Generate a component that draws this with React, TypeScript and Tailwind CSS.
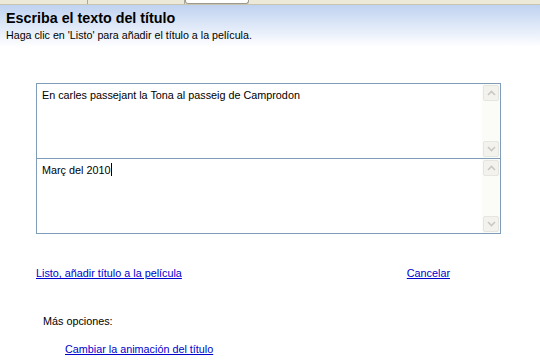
import React from "react"

function Arrow({ up }: { up: boolean }) {
  return (
    <div className="flex h-[16px] w-[16px] items-center justify-center rounded-[2px] border border-[#e6e6e0] bg-[#f3f2ec]">
      <svg width="9" height="6" viewBox="0 0 9 6">
        <path
          d={up ? "M1 5 L4.5 1.5 L8 5" : "M1 1 L4.5 4.5 L8 1"}
          fill="none"
          stroke="#c9c9c4"
          strokeWidth="1.6"
        />
      </svg>
    </div>
  )
}

function TextBox({ text, caret }: { text: string; caret?: boolean }) {
  return (
    <div className="flex h-[76px] border border-[#7f9db9] bg-white">
      <div className="flex-1 px-[5px] pt-[4px] text-[10.8px] leading-[14px] text-black">
        {text}
        {caret && <span className="ml-[1px] inline-block h-[13px] w-[1px] bg-black align-[-2px]" />}
      </div>
      <div className="flex w-[18px] flex-col justify-between bg-[#fbfbf8] p-[1px]">
        <Arrow up />
        <Arrow up={false} />
      </div>
    </div>
  )
}

export default function App() {
  return (
    <div className="h-[360px] w-[540px] overflow-hidden bg-white font-['Liberation_Sans',Arial,sans-serif]">
      <div className="flex h-[5px] border-b border-[#c8c4b0] bg-[#ece9d8]">
        <div className="w-[88px] border-r border-[#aca899]" />
        <div className="w-[97px] border-r border-[#aca899]" />
        <div className="w-[64px] rounded-b-[3px] border-x border-b border-[#9c9a8c] bg-white" />
      </div>
      <div className="h-[42px] bg-gradient-to-b from-[#bfd2f0] to-white px-[6px] pt-[5px]">
        <h1 className="text-[14.3px] font-bold leading-[17px] text-black">Escriba el texto del título</h1>
        <p className="mt-[2px] text-[10.7px] leading-[13px] text-black">
          Haga clic en 'Listo' para añadir el título a la película.
        </p>
      </div>
      <div className="ml-[36px] mt-[36px] w-[465px]">
        <TextBox text="En carles passejant la Tona al passeig de Camprodon" />
        <div className="-mt-[1px]">
          <TextBox text="Març del 2010" caret />
        </div>
      </div>
      <div className="ml-[36px] mt-[32px] flex w-[414px] justify-between text-[10.8px] leading-[14px]">
        <a href="#" className="text-[#0000cc] underline">Listo, añadir título a la película</a>
        <a href="#" className="text-[#0000cc] underline">Cancelar</a>
      </div>
      <p className="ml-[43px] mt-[34px] text-[10.8px] leading-[14px] text-black">Más opciones:</p>
      <a href="#" className="ml-[65px] mt-[14px] block text-[10.8px] leading-[14px] text-[#0000cc] underline">
        Cambiar la animación del título
      </a>
    </div>
  )
}
